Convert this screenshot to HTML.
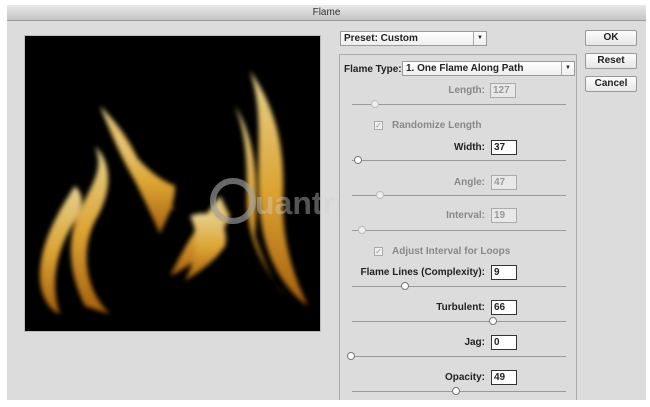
<!DOCTYPE html>
<html><head><style>
*{margin:0;padding:0;box-sizing:border-box}
body{width:650px;height:407px;background:#fff;position:relative;overflow:hidden;font-family:"Liberation Sans",sans-serif;font-size:10px;color:#222}
.a{position:absolute}
.dlg{left:7px;top:5px;width:639px;height:395px;background:#dcdcdc}
.title{left:7px;top:5px;width:639px;height:16px;background:linear-gradient(#e8e8e8,#c4c4c4);border-bottom:1px solid #999;text-align:center;font-size:10px;line-height:15px;color:#333}
.btn{background:linear-gradient(#fdfdfd,#e6e6e6);border:1px solid #999;border-radius:2px;text-align:center;font-weight:bold;font-size:10px;line-height:14px;width:52px;height:16px;left:585px}
.sel{background:linear-gradient(#fff,#eee);border:1px solid #999;font-weight:bold;font-size:10px;line-height:13px;padding-left:3px}
.arr{position:absolute;right:0;top:0;width:13px;height:100%;border-left:1px solid #aaa;font-size:6px;text-align:center;line-height:13px}
.panel{left:339px;top:54px;width:238px;height:350px;border:1px solid #aaa;background:#dcdcdc}
.lbl{font-weight:bold;text-align:right;width:140px;font-size:10px}
.dis{color:#888}
.box{width:26px;height:15px;border:1px solid #333;background:#fff;font-size:10px;font-weight:bold;line-height:13px;padding-left:2px}
.box.d{border-color:#aaa;background:#e8e8e8;color:#999}
.sl{left:352px;width:214px;height:1px;background:#999}
.kn{width:8px;height:8px;border:1px solid #777;border-radius:50%;background:#fff}
.kn.d{border-color:#bbb;background:#eee}
.chk{width:9px;height:9px;border:1px solid #aaa;background:#eee;font-size:8px;line-height:7px;color:#999;text-align:center}
</style></head><body>
<div class="a dlg"></div>
<div class="a title">Flame</div>
<div class="a" style="left:24px;top:35px;width:297px;height:297px;background:#000;border:1px solid #bbb;overflow:hidden">
<svg width="297" height="297" viewBox="0 0 297 297">
<defs><linearGradient id="g" x1="0" y1="0" x2="0" y2="1"><stop offset="0" stop-color="#ffe9a0"/><stop offset=".5" stop-color="#f5b63a"/><stop offset="1" stop-color="#b86a10"/></linearGradient>
<filter id="b"><feGaussianBlur stdDeviation="2.5"/></filter></defs>
<g fill="url(#g)" filter="url(#b)" opacity=".9">
<path d="M70 110 C80 135 65 150 55 175 C40 205 45 240 60 270 L85 278 C60 255 55 215 70 185 C85 160 90 130 70 110Z"/>
<path d="M50 150 C30 180 15 210 15 240 C15 260 25 275 35 278 C25 250 30 215 50 185 C58 170 60 160 50 150Z"/>
<path d="M75 70 C100 95 110 115 118 135 C125 150 135 165 150 172 C140 180 125 165 110 145 C95 120 85 95 75 70Z"/>
<path d="M90 95 C110 120 125 140 150 150 C150 170 140 185 135 198 C125 175 115 155 105 135 C98 120 92 108 90 95Z"/>
<path d="M225 35 C250 70 260 110 258 160 C256 200 268 240 283 270 C255 250 238 215 235 175 C230 125 240 80 225 35Z"/>
<path d="M210 70 C235 110 232 160 230 200 C240 230 250 250 260 260 C240 235 222 205 222 165 C222 130 222 100 210 70Z"/>
<path d="M195 160 C175 185 160 210 145 240 C175 225 195 205 205 180Z"/>
<path d="M165 180 C190 170 205 190 200 210 C190 225 175 235 160 245 C172 220 175 200 165 180Z"/>
</g></svg></div>
<div class="a" style="left:210px;top:178px;width:46px;height:46px;border-radius:50%;border:6px solid rgba(160,160,160,.65)"></div>
<div class="a" style="left:255px;top:185px;font-size:32px;font-weight:bold;color:rgba(210,210,210,.4)">uantrimang</div>
<div class="a sel" style="left:340px;top:31px;width:147px;height:15px">Preset: Custom<div class="arr">▼</div></div>
<div class="a btn" style="top:30px">OK</div>
<div class="a btn" style="top:53px">Reset</div>
<div class="a btn" style="top:76px">Cancel</div>
<div class="a panel"></div>
<div class="a" style="left:344px;top:64px;font-weight:bold">Flame Type:</div>
<div class="a sel" style="left:402px;top:61px;width:173px;height:15px">1. One Flame Along Path<div class="arr">▼</div></div>

<div class="a lbl dis" style="left:345px;top:85px">Length:</div><div class="a box d" style="left:490px;top:83px">127</div>
<div class="a sl" style="top:104px"></div><div class="a kn d" style="left:371px;top:100px"></div>
<div class="a chk" style="left:374px;top:121px">✓</div><div class="a dis" style="left:392px;top:120px;font-weight:bold">Randomize Length</div>
<div class="a lbl" style="left:345px;top:142px">Width:</div><div class="a box" style="left:491px;top:140px">37</div>
<div class="a sl" style="top:160px"></div><div class="a kn" style="left:354px;top:156px"></div>
<div class="a lbl dis" style="left:345px;top:177px">Angle:</div><div class="a box d" style="left:491px;top:175px">47</div>
<div class="a sl" style="top:195px"></div><div class="a kn d" style="left:376px;top:191px"></div>
<div class="a lbl dis" style="left:345px;top:210px">Interval:</div><div class="a box d" style="left:491px;top:208px">19</div>
<div class="a sl" style="top:230px"></div><div class="a kn d" style="left:358px;top:226px"></div>
<div class="a chk" style="left:374px;top:247px">✓</div><div class="a dis" style="left:392px;top:246px;font-weight:bold">Adjust Interval for Loops</div>
<div class="a lbl" style="left:345px;top:267px">Flame Lines (Complexity):</div><div class="a box" style="left:491px;top:265px">9</div>
<div class="a sl" style="top:286px"></div><div class="a kn" style="left:401px;top:282px"></div>
<div class="a lbl" style="left:345px;top:302px">Turbulent:</div><div class="a box" style="left:491px;top:300px">66</div>
<div class="a sl" style="top:321px"></div><div class="a kn" style="left:489px;top:317px"></div>
<div class="a lbl" style="left:345px;top:337px">Jag:</div><div class="a box" style="left:491px;top:335px">0</div>
<div class="a sl" style="top:356px"></div><div class="a kn" style="left:347px;top:352px"></div>
<div class="a lbl" style="left:345px;top:372px">Opacity:</div><div class="a box" style="left:491px;top:370px">49</div>
<div class="a sl" style="top:391px"></div><div class="a kn" style="left:452px;top:387px"></div>
<div class="a" style="left:0;top:400px;width:650px;height:7px;background:#fff"></div>
</body></html>
